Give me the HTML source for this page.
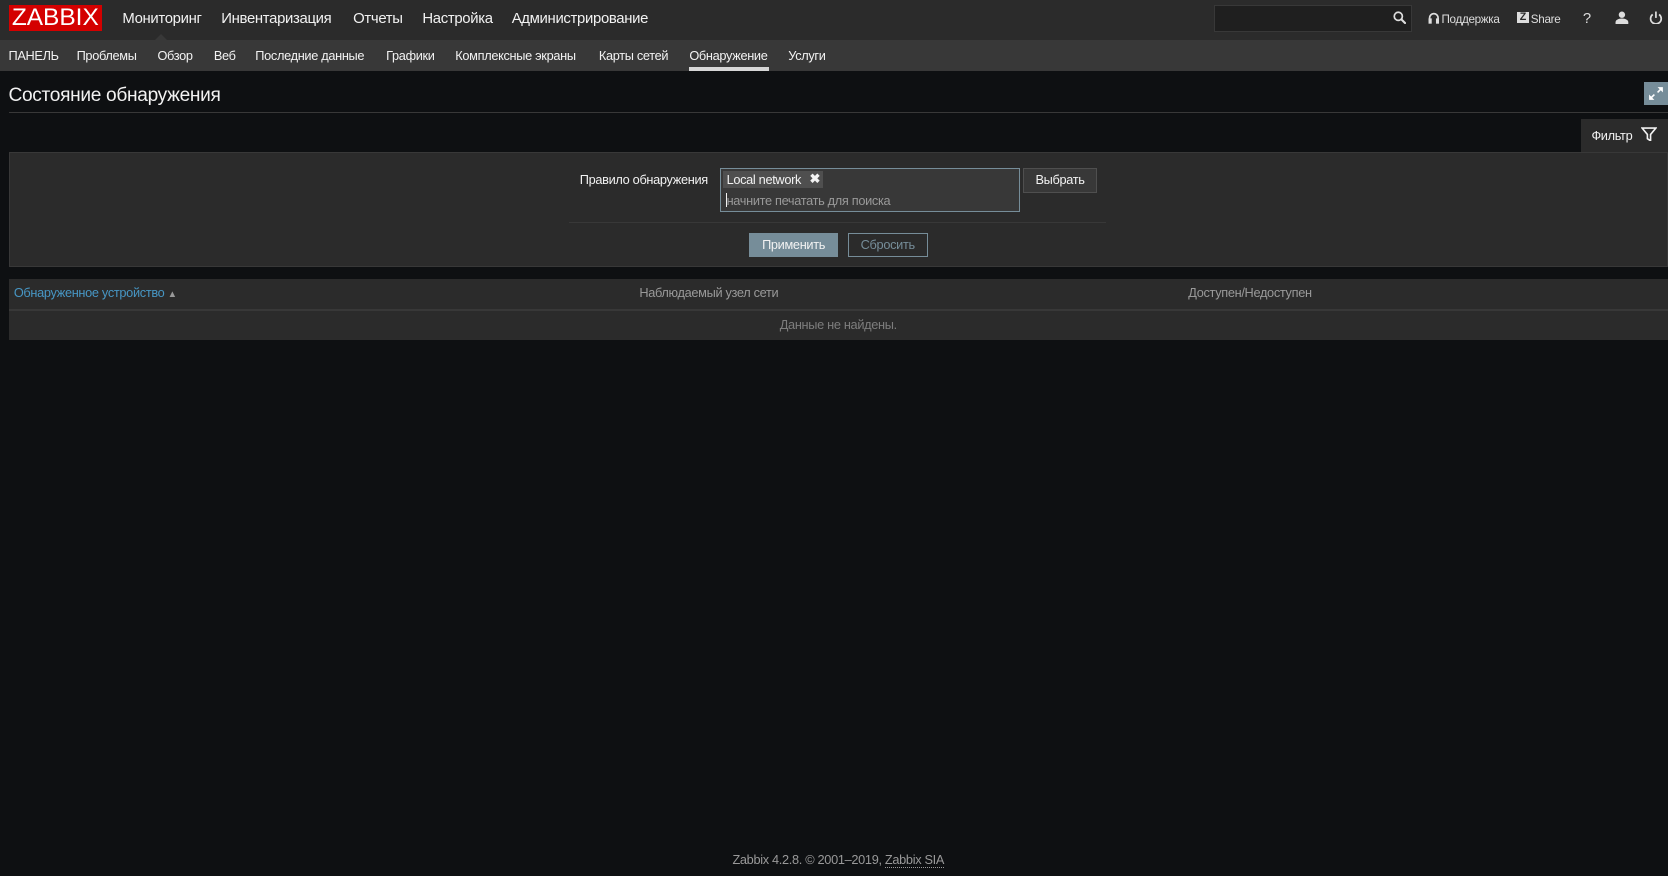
<!DOCTYPE html>
<html><head><meta charset="utf-8"><style>
html{zoom:1.0638}
body{margin:0;width:1568px;height:823px;background:#0e1012;font-family:"Liberation Sans",Arial,sans-serif;color:#f2f2f2;position:relative;overflow:hidden;letter-spacing:-0.3px}
.a{position:absolute;white-space:nowrap}
.top{left:0;top:0;width:1568px;height:38px;background:#2b2b2b}
.sub{left:0;top:38px;width:1568px;height:29px;background:#383838}
.m{font-size:14px;top:10px;color:#f2f2f2}
.s{font-size:12px;top:45px;color:#f2f2f2}
.btn{font-size:12px;text-align:center;box-sizing:border-box}
</style></head><body>
<div class="a top"></div>
<div class="a sub"></div>
<div class="a" style="left:8px;top:5px;width:88px;height:24px;background:#d40000;color:#fff;font-size:23px;line-height:24px;text-align:center;letter-spacing:0px">ZABBIX</div>
<div class="a m" style="left:115px">Мониторинг</div>
<div class="a m" style="left:208px">Инвентаризация</div>
<div class="a m" style="left:332px">Отчеты</div>
<div class="a m" style="left:397px">Настройка</div>
<div class="a m" style="left:481px">Администрирование</div>
<div class="a" style="left:146px;top:32px;width:0;height:0;border-left:6px solid transparent;border-right:6px solid transparent;border-bottom:6px solid #383838"></div>
<div class="a" style="left:1141px;top:5px;width:186px;height:25px;box-sizing:border-box;background:#1f1f1f;border:1px solid #383838"></div>
<svg class="a" style="left:1309px;top:10px" width="13" height="13" viewBox="0 0 13 13"><circle cx="5" cy="5" r="3.8" fill="none" stroke="#ddd" stroke-width="1.6"/><path d="M8 8l4 4" stroke="#ddd" stroke-width="2"/></svg>
<svg class="a" style="left:1342px;top:11px" width="11" height="12" viewBox="0 0 11 12"><path d="M1.5 9V5.5a4 4 0 0 1 8 0V9" fill="none" stroke="#ddd" stroke-width="1.6"/><rect x="0.5" y="6" width="3" height="5" fill="#ddd"/><rect x="7.5" y="6" width="3" height="5" fill="#ddd"/></svg>
<div class="a" style="left:1355px;top:12px;font-size:11px;color:#ddd">Поддержка</div>
<div class="a" style="left:1426px;top:11px;width:11px;height:11px;background:#ddd;color:#2b2b2b;font-size:10px;font-weight:bold;line-height:11px;text-align:center">Z</div>
<div class="a" style="left:1439px;top:12px;font-size:11px;color:#ddd">Share</div>
<div class="a" style="left:1488px;top:10px;font-size:14px;color:#ddd">?</div>
<svg class="a" style="left:1518px;top:10px" width="13" height="13" viewBox="0 0 13 13"><circle cx="6.5" cy="3.5" r="3" fill="#ddd"/><path d="M0.5 13v-2.5c0-2 2.5-3.5 6-3.5s6 1.5 6 3.5V13z" fill="#ddd"/></svg>
<svg class="a" style="left:1550px;top:10px" width="13" height="13" viewBox="0 0 13 13"><path d="M3.5 3.2a5 5 0 1 0 6 0" fill="none" stroke="#ddd" stroke-width="1.6"/><path d="M6.5 0.5v6" stroke="#ddd" stroke-width="1.6"/></svg>
<div class="a s" style="left:8px">ПАНЕЛЬ</div>
<div class="a s" style="left:72px">Проблемы</div>
<div class="a s" style="left:148px">Обзор</div>
<div class="a s" style="left:201px">Веб</div>
<div class="a s" style="left:240px">Последние данные</div>
<div class="a s" style="left:363px">Графики</div>
<div class="a s" style="left:428px">Комплексные экраны</div>
<div class="a s" style="left:563px">Карты сетей</div>
<div class="a s" style="left:648px">Обнаружение</div>
<div class="a" style="left:648px;top:63px;width:75px;height:4px;background:#d6d6d6"></div>
<div class="a s" style="left:741px">Услуги</div>
<div class="a" style="left:8px;top:80px;font-size:18px">Состояние обнаружения</div>
<div class="a" style="left:8px;top:105px;width:1560px;height:1px;background:#383838"></div>
<div class="a" style="left:1545px;top:77px;width:23px;height:22px;background:#768d99"></div>
<svg class="a" style="left:1549px;top:81px" width="15" height="14" viewBox="0 0 15 14"><path d="M9 1h5v5zM1 8v5h5z" fill="#fff"/><path d="M12 3L9 6M3 11l3-3" stroke="#fff" stroke-width="1.5"/></svg>
<div class="a" style="left:1486px;top:112px;width:82px;height:31px;background:#2b2b2b"></div>
<div class="a" style="left:1496px;top:120px;font-size:12px">Фильтр</div>
<svg class="a" style="left:1543px;top:119px" width="15" height="14" viewBox="0 0 15 14"><path d="M1 1h13L9 7v6l-3-2V7z" fill="none" stroke="#f2f2f2" stroke-width="1.5"/></svg>
<div class="a" style="left:8px;top:143px;width:1560px;height:108px;box-sizing:border-box;background:#2b2b2b;border:1px solid #383838"></div>
<div class="a" style="left:545px;top:162px;font-size:12px">Правило обнаружения</div>
<div class="a" style="left:677px;top:158px;width:282px;height:41px;box-sizing:border-box;background:#383838;border:1px solid #768d99"></div>
<div class="a" style="left:680px;top:161px;width:94px;height:16px;background:#4f4f4f"></div>
<div class="a" style="left:683px;top:162px;font-size:12px">Local network</div>
<div class="a" style="left:761px;top:161px;font-size:12px;font-weight:bold;color:#f2f2f2">✖</div>
<div class="a" style="left:682px;top:181px;width:1px;height:14px;background:#f2f2f2"></div>
<div class="a" style="left:683px;top:181px;font-size:12px;color:#999">начните печатать для поиска</div>
<div class="a btn" style="left:962px;top:158px;width:69px;height:23px;background:#383838;border:1px solid #4f4f4f;line-height:21px">Выбрать</div>
<div class="a" style="left:535px;top:209px;width:505px;height:1px;background:#383838"></div>
<div class="a btn" style="left:704px;top:219px;width:84px;height:23px;background:#768d99;line-height:23px">Применить</div>
<div class="a btn" style="left:797px;top:219px;width:75px;height:23px;border:1px solid #768d99;color:#768d99;line-height:21px">Сбросить</div>
<div class="a" style="left:8px;top:262px;width:1560px;height:58px;background:#2b2b2b"></div>
<div class="a" style="left:8px;top:290px;width:1560px;height:2px;background:#383838"></div>
<div class="a" style="left:13px;top:268px;font-size:12px;color:#4796c4">Обнаруженное устройство <span style="color:#999;font-size:9px">▲</span></div>
<div class="a" style="left:601px;top:268px;font-size:12px;color:#999">Наблюдаемый узел сети</div>
<div class="a" style="left:1117px;top:268px;font-size:12px;color:#999">Доступен/Недоступен</div>
<div class="a" style="left:0;width:1576px;top:298px;font-size:12px;color:#7d7d7d;text-align:center">Данные не найдены.</div>
<div class="a" style="left:0;width:1576px;top:801px;font-size:12px;color:#999;text-align:center">Zabbix 4.2.8. © 2001–2019, <span style="border-bottom:1px dotted #999">Zabbix SIA</span></div>
</body></html>
